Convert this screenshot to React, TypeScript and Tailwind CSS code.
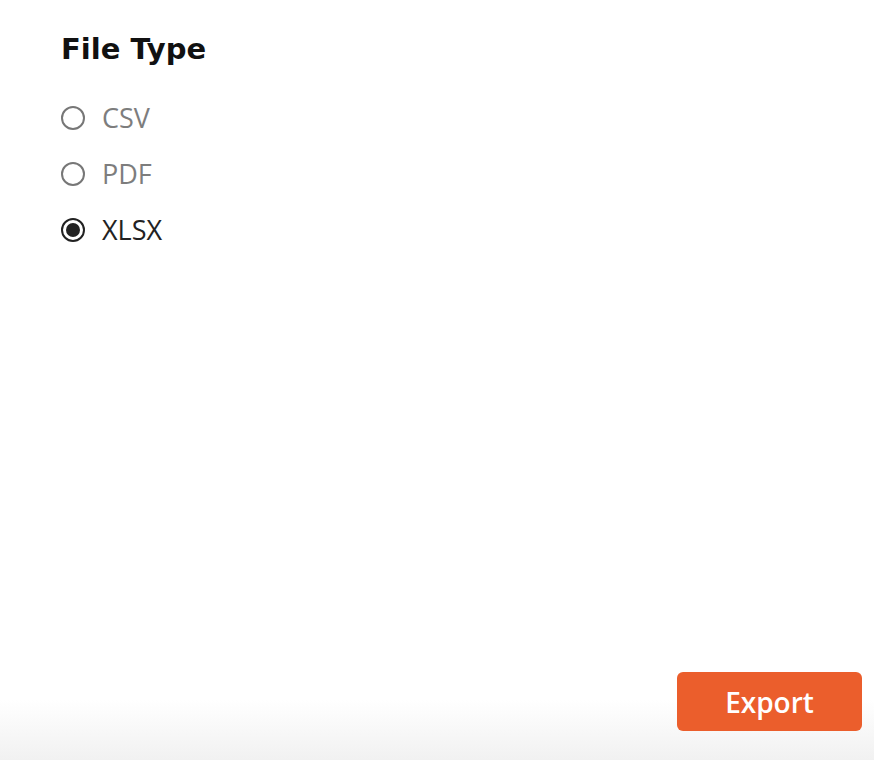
import { useState } from 'react'

const FILE_TYPES = ['CSV', 'PDF', 'XLSX']

export default function App() {
  const [selected, setSelected] = useState('XLSX')

  return (
    <div className="flex h-[760px] w-full flex-col bg-white font-[family-name:'Open_Sans',sans-serif]">
      <div className="flex-1 pl-[61px] pt-[31px]">
        <h2 className="font-[family-name:'DejaVu_Sans',sans-serif] text-[29px] font-bold leading-[36px] text-[#111]">
          File Type
        </h2>

        {/* Radio options */}
        <div className="mt-[33px] flex flex-col gap-[20px]">
          {FILE_TYPES.map((t) => {
            const active = t === selected
            return (
              <label key={t} className="flex h-[36px] cursor-pointer items-center gap-[17px]" onClick={() => setSelected(t)}>
                <span
                  className={
                    active
                      ? 'flex h-[24px] w-[24px] items-center justify-center rounded-full border-2 border-[#222]'
                      : 'flex h-[24px] w-[24px] items-center justify-center rounded-full border-2 border-[#777]'
                  }
                >
                  {active && <span className="h-[14px] w-[14px] rounded-full bg-[#222]" />}
                </span>
                <span className={active ? 'text-[27px] text-[#222]' : 'text-[27px] text-[#7d7d7d]'}>{t}</span>
              </label>
            )
          })}
        </div>
      </div>

      {/* Footer */}
      <footer className="flex h-[100px] items-start justify-end bg-gradient-to-b from-white from-40% to-[#f1f1f1] pr-[12px] pt-[12px]">
        <button className="h-[59px] w-[185px] rounded-[6px] bg-[#eb5e2c] text-[28px] font-semibold text-white">
          Export
        </button>
      </footer>
    </div>
  )
}
